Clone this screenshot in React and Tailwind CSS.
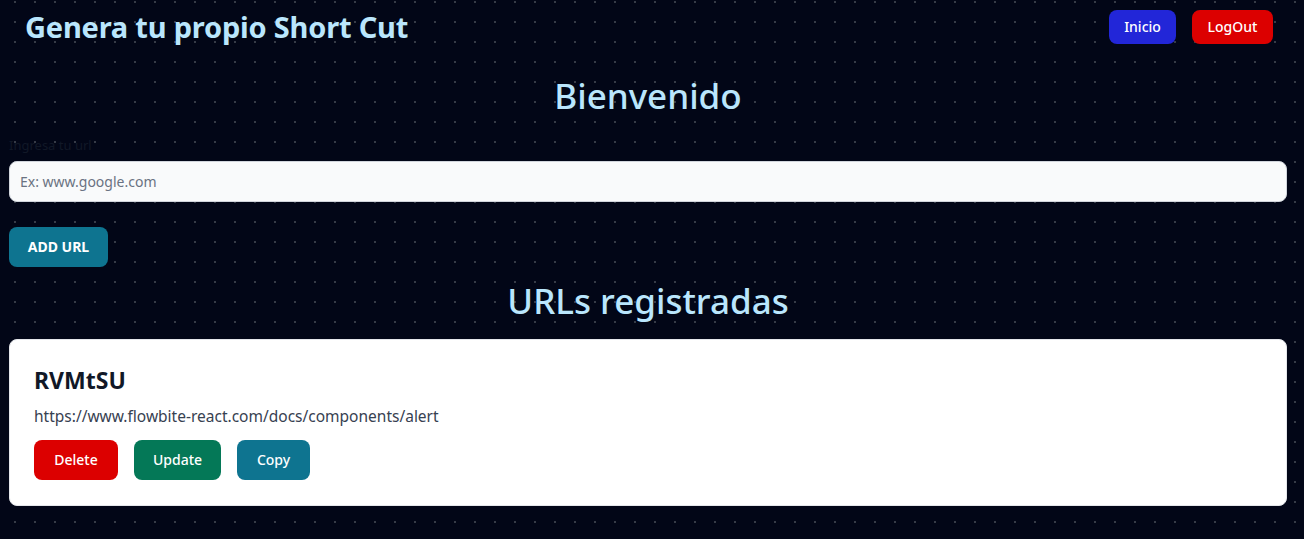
export default function App() {
  return (
    <div
      className="min-h-[539px] w-full bg-[#020617] font-['Noto_Sans',sans-serif]"
      style={{
        backgroundImage: "radial-gradient(circle, #363b47 1px, transparent 1.2px)",
        backgroundSize: "20px 20px",
        backgroundPosition: "5px -8px",
      }}
    >
      {/* Header */}
      <header className="flex items-center justify-between pl-[25px] pr-[31px] pt-[10px]">
        <h1 className="text-[29px] font-bold leading-[34px] tracking-[-0.2px] text-[#bae6fd]">
          Genera tu propio Short Cut
        </h1>
        <nav className="flex gap-4">
          <button className="h-[34px] w-[67px] rounded-lg bg-[#2226d8] text-sm font-medium text-white">
            Inicio
          </button>
          <button className="h-[34px] w-[81px] rounded-lg bg-[#dc0000] text-sm font-medium text-white">
            LogOut
          </button>
        </nav>
      </header>

      <main className="pl-[9px] pr-[17px]">
        <h2 className="mt-[30px] text-center text-[35px] font-medium leading-[44px] text-[#bae6fd]">
          Bienvenido
        </h2>

        <label className="mt-[18px] block text-[13px] leading-[18px] text-[#111827]">
          Ingresa tu url
        </label>
        <input
          placeholder="Ex: www.google.com"
          className="mt-[7px] block h-[41px] w-full rounded-lg border border-gray-300 bg-gray-50 px-[10px] text-sm text-gray-900 placeholder:text-gray-500"
        />

        <button className="mt-[25px] h-[40px] w-[99px] rounded-lg bg-[#0e7490] text-sm font-bold text-white">
          ADD URL
        </button>

        <h2 className="mt-[12px] text-center text-[35px] font-medium leading-[44px] text-[#bae6fd]">
          URLs registradas
        </h2>

        <div className="mt-[16px] rounded-lg border border-gray-200 bg-white px-[24px] pb-[25px] pt-[24px]">
          <h3 className="text-[23px] font-bold leading-[32px] text-[#111827]">RVMtSU</h3>
          <p className="mt-[8px] text-[15.5px] leading-[24px] text-[#374151]">
            https://www.flowbite-react.com/docs/components/alert
          </p>
          <div className="mt-[12px] flex gap-4">
            <button className="h-[40px] w-[84px] rounded-lg bg-[#dc0000] text-sm font-medium text-white">
              Delete
            </button>
            <button className="h-[40px] w-[87px] rounded-lg bg-[#047857] text-sm font-medium text-white">
              Update
            </button>
            <button className="h-[40px] w-[73px] rounded-lg bg-[#0e7490] text-sm font-medium text-white">
              Copy
            </button>
          </div>
        </div>
      </main>
    </div>
  );
}
